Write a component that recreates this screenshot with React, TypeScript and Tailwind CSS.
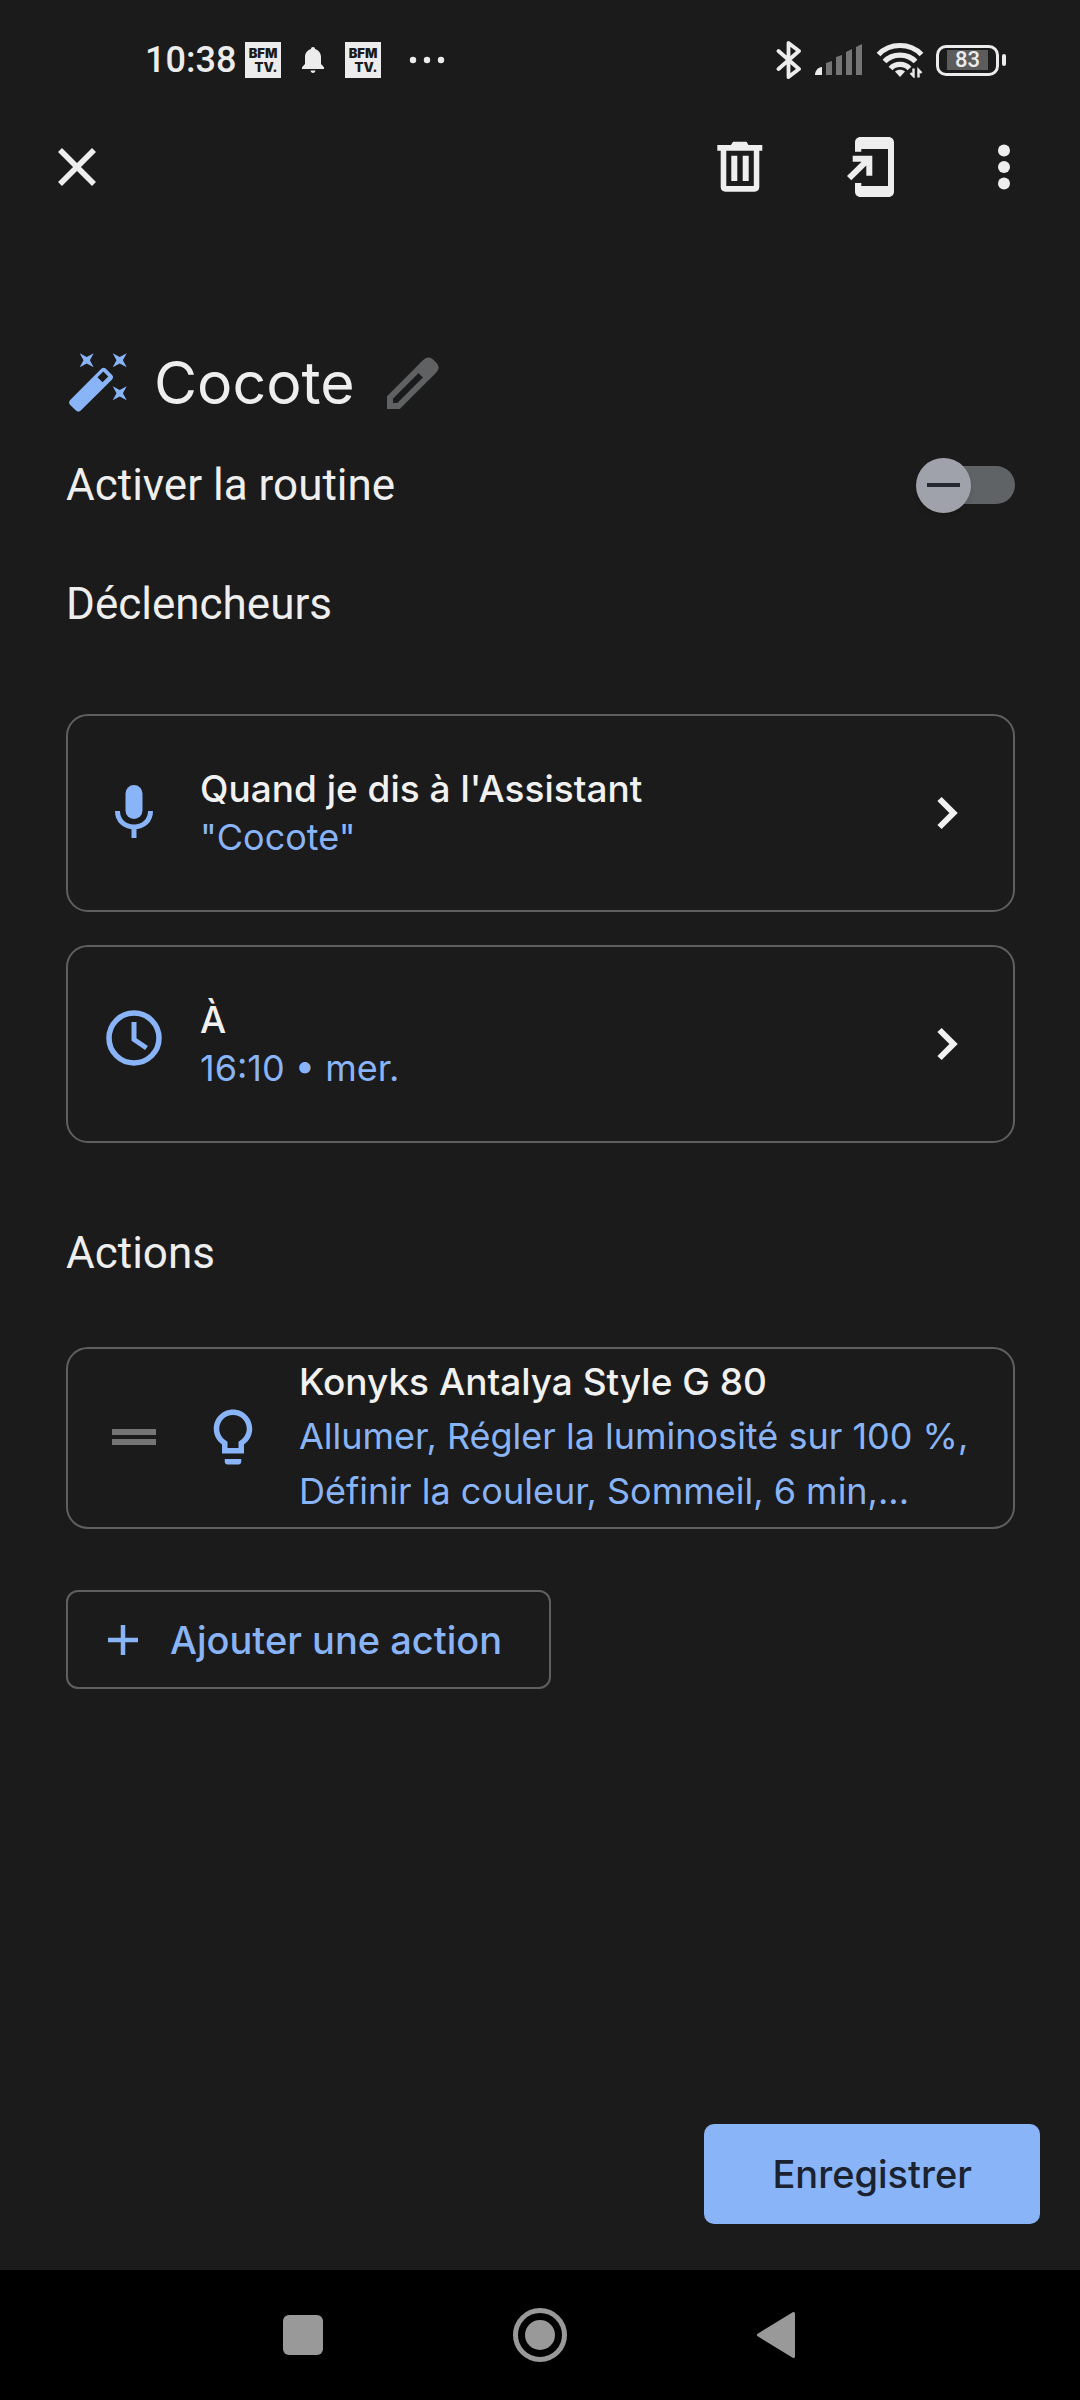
import { useState, type ReactNode } from "react";

function ChannelBadge() {
  return (
    <span className="flex h-9 w-9 flex-col items-end justify-center bg-[#ececec] pr-1 font-[Inter,sans-serif] text-[13px] leading-[14px] font-black text-[#1b1b1b]">
      <span>BFM</span>
      <span>TV.</span>
    </span>
  );
}

function StatusBar() {
  return (
    <div className="flex h-[120px] items-center pr-[74px] pl-[145px] text-[#ececec]">
      <span className="font-[Roboto,sans-serif] text-[36px] leading-[44px] font-medium">10:38</span>
      <div className="ml-[9px] flex items-center">
        <ChannelBadge />
        <svg className="ml-5 h-[26px] w-6" viewBox="0 0 24 26" fill="currentColor" aria-hidden="true">
          <path d="M12 0c1.3 0 2 .9 2 2.1C17.600 3.200 20 6.200 20 10v7l3 3.200V22H1v-1.800L4 17v-7c0-3.800 2.400-6.800 6-7.900C10 .9 10.700 0 12 0zM9.600 23.500h4.800c0 1.400-1 2.500-2.400 2.500s-2.400-1.100-2.400-2.500z" />
        </svg>
        <span className="ml-5">
          <ChannelBadge />
        </span>
        <svg className="ml-7 h-2 w-9" viewBox="0 0 36 8" fill="currentColor" aria-hidden="true">
          <circle cx="4" cy="4" r="3.200" />
          <circle cx="18" cy="4" r="3.200" />
          <circle cx="32" cy="4" r="3.200" />
        </svg>
      </div>
      <div className="ml-auto flex items-center gap-3">
        <svg className="h-10 w-[26px]" viewBox="0 0 26 40" fill="none" stroke="currentColor" strokeWidth="3.800" strokeLinejoin="round" strokeLinecap="round" aria-hidden="true">
          <path d="M2.500 11 23 29 12.500 37V3L23 11 2.500 29" />
        </svg>
        <svg className="h-8 w-[50px]" viewBox="0 0 50 32" aria-hidden="true">
          <path d="M1 31c0-4 3-8 7-8v8z" fill="#ececec" />
          <path d="M12 19l6-2v14h-6zM22 13l6-2v20h-6zM32 8l6-3v26h-6zM42 3l6-3v31h-6z" fill="#757575" />
        </svg>
        <svg className="h-9 w-12" viewBox="0 0 48 36" fill="none" stroke="currentColor" strokeWidth="5.200" aria-hidden="true">
          <path d="M2.500 12.500C14 .5 34 .5 45.500 12.500" />
          <path d="M8.500 19.500c8-8.500 23-8.500 31 0" />
          <path d="M14.500 26.500c5-5.500 14-5.500 19 0" />
          <path d="M24 35l-5-5.500c2.500-2.300 7.500-2.300 10 0z" fill="currentColor" stroke="none" />
          <path d="M37.500 26.500V34l-3-3M42.500 35.500V28l3 3" strokeWidth="2.400" />
        </svg>
        <div className="flex items-center gap-[3px]">
          <span className="flex h-[31px] w-[63px] items-center justify-center rounded-[10px] border-[3px] border-[#ececec]">
            <span className="flex h-5 w-[41px] items-center justify-center bg-[#5c5c5c] font-[Roboto,sans-serif] text-[22px] leading-5 font-medium">
              83
            </span>
          </span>
          <span className="h-3 w-1 rounded-sm bg-[#ececec]" />
        </div>
      </div>
    </div>
  );
}

function IconButton({ label, children }: { label: string; children: ReactNode }) {
  return (
    <button type="button" aria-label={label} className="h-[66px] w-[66px]">
      {children}
    </button>
  );
}

function Header() {
  return (
    <header className="flex h-[94px] items-center justify-between pr-[43px] pl-11 text-[#eeeeee]">
      <IconButton label="Fermer">
        <svg viewBox="0 0 66 66" fill="none" stroke="currentColor" strokeWidth="5.600" aria-hidden="true">
          <path d="M16 16l34 34M50 16L16 50" />
        </svg>
      </IconButton>
      <div className="flex gap-[66px]">
        <IconButton label="Supprimer">
          <svg viewBox="0 0 66 66" fill="currentColor" aria-hidden="true">
            <path fillRule="evenodd" d="M26 7.700h13.500L41.500 11h13.800v5.700h-3V53c0 2.800-2 4.700-4.700 4.700H18.400c-2.700 0-4.700-1.900-4.700-4.700V16.700h-3.400V11H24zM19.300 16.700V52h27.500V16.700z" />
            <path d="M24.300 21.700h6V47h-6zM35.700 21.700h6V47h-6z" />
          </svg>
        </IconButton>
        <IconButton label="Ajouter à l'écran d'accueil">
          <svg viewBox="-5 0 66 66" fill="currentColor" aria-hidden="true">
            <path d="M11 17.700V8.500C11 5.300 13.300 3 16.500 3h28C47.700 3 50 5.300 50 8.500v49c0 3.200-2.300 5.500-5.500 5.500h-28c-3.200 0-5.500-2.300-5.500-5.500V49h6.300v3H44V15H17.300v2.700z" />
            <path d="M8.700 21.700h19.600v20H22.300V31.500L7.300 46.200 3 41.900 17.600 27.700H8.700z" />
          </svg>
        </IconButton>
        <IconButton label="Plus d'options">
          <svg viewBox="0 0 66 66" fill="currentColor" aria-hidden="true">
            <circle cx="33" cy="16.500" r="6" />
            <circle cx="33" cy="33" r="6" />
            <circle cx="33" cy="49.500" r="6" />
          </svg>
        </IconButton>
      </div>
    </header>
  );
}

function WandIcon() {
  return (
    <svg className="h-[66px] w-[66px]" viewBox="2 0 66 66" fill="#8ab4f8" aria-hidden="true">
      <path fillRule="evenodd" d="M37.300 18.800c1.400-1.400 3.200-1.400 4.600 0l6.200 6.200c1.300 1.300 1.300 3 0 4.400L16.800 60.600c-1.500 1.500-3.400 1.500-4.900 0l-5.700-5.700c-1.500-1.500-1.500-3.400 0-4.900zM39.300 21.500l-5.800 5.800 5 5 5.800-5.800z" />
      <path d="M15.700 3.300l7 3.800 7-3.800-3.800 7 3.800 7-7-3.800-7 3.800 3.800-7zM48.700 3.300l7 3.800 7-3.800-3.800 7 3.800 7-7-3.800-7 3.800 3.800-7zM48.700 36.300l7 3.800 7-3.800-3.800 7 3.800 7-7-3.800-7 3.800 3.800-7z" />
    </svg>
  );
}

function MicIcon() {
  return (
    <svg className="h-[66px] w-[66px]" viewBox="0 0 66 66" aria-hidden="true">
      <rect x="24.500" y="11" width="17" height="34" rx="8.500" fill="#8ab4f8" />
      <path d="M16.500 37c0 9.500 7 16 16.500 16s16.500-6.500 16.500-16M33 53v11" fill="none" stroke="#8ab4f8" strokeWidth="5" />
    </svg>
  );
}

function ClockIcon() {
  return (
    <svg className="h-[66px] w-[66px]" viewBox="0 0 66 66" fill="none" stroke="#8ab4f8" strokeWidth="5.500" aria-hidden="true">
      <circle cx="33" cy="33" r="25" />
      <path d="M33 17v17.500l12.500 8.500" strokeWidth="5" />
    </svg>
  );
}

function TriggerCard({ icon, title, detail }: { icon: ReactNode; title: string; detail: string }) {
  return (
    <button
      type="button"
      className="flex h-[198px] w-full items-center rounded-[22px] border-2 border-[#5f5f5f] px-[33px] text-left font-[Inter,sans-serif]"
    >
      <span className="mb-3">{icon}</span>
      <span className="ml-[33px] flex flex-1 flex-col leading-12">
        <span className="text-[37px] font-medium text-[#f1f1f1]">{title}</span>
        <span className="text-[36px] text-[#8ab4f8]">{detail}</span>
      </span>
      <svg className="h-[66px] w-[66px]" viewBox="0 0 66 66" fill="none" stroke="#f1f1f1" strokeWidth="6" aria-hidden="true">
        <path d="M25.500 19l14 14-14 14" />
      </svg>
    </button>
  );
}

function ActionCard() {
  return (
    <div className="flex items-center rounded-[22px] border-2 border-[#5f5f5f] pt-[5px] pr-7 pb-2 pl-[33px] font-[Inter,sans-serif]">
      <button type="button" aria-label="Déplacer l'action" className="flex h-[66px] w-[66px] flex-col items-center justify-center gap-1">
        <span className="h-1.5 w-11 bg-[#757575]" />
        <span className="h-1.5 w-11 bg-[#757575]" />
      </button>
      <svg className="ml-[33px] h-[66px] w-[66px] shrink-0" viewBox="0 0 24 24" fill="#8ab4f8" aria-hidden="true">
        <path d="M9 21c0 .55.45 1 1 1h4c.55 0 1-.45 1-1v-1H9v1zm3-19C8.140 2 5 5.140 5 9c0 2.380 1.190 4.470 3 5.740V18h8v-3.260c1.810-1.270 3-3.360 3-5.740 0-3.860-3.140-7-7-7zm2.850 11.100-.85.6V16h-4v-2.300l-.85-.6C7.800 12.160 7 10.630 7 9c0-2.760 2.240-5 5-5s5 2.240 5 5c0 1.630-.8 3.160-2.150 4.100z" />
      </svg>
      <div className="ml-[33px] min-w-0 flex-1 leading-[55px]">
        <p className="truncate text-[37px] font-medium text-[#f1f1f1]">Konyks Antalya Style G 80</p>
        <p className="text-[36px] text-[#8ab4f8]">Allumer, Régler la luminosité sur 100&nbsp;%, Définir la couleur, Sommeil, 6 min,...</p>
      </div>
    </div>
  );
}

function SectionTitle({ children }: { children: ReactNode }) {
  return <h2 className="font-[Roboto,sans-serif] text-[44px] leading-[52px] text-[#eeeeee]">{children}</h2>;
}

function NavigationBar() {
  return (
    <nav aria-label="Navigation du système" className="flex h-[130px] items-center justify-center gap-[181px] bg-black">
      <button type="button" aria-label="Applications récentes" className="h-14 w-14">
        <svg viewBox="0 0 56 56" fill="#999999" aria-hidden="true">
          <rect x="8" y="8" width="40" height="40" rx="6" />
        </svg>
      </button>
      <button type="button" aria-label="Accueil" className="h-14 w-14">
        <svg viewBox="0 0 56 56" aria-hidden="true">
          <circle cx="28" cy="28" r="24.500" fill="none" stroke="#999999" strokeWidth="5" />
          <circle cx="28" cy="28" r="15" fill="#999999" />
        </svg>
      </button>
      <button type="button" aria-label="Retour" className="h-14 w-14">
        <svg viewBox="0 0 56 56" fill="#999999" stroke="#999999" strokeWidth="3" strokeLinejoin="round" aria-hidden="true">
          <path d="M9.500 28L44.500 6.500v43z" />
        </svg>
      </button>
    </nav>
  );
}

export default function App() {
  const [enabled, setEnabled] = useState(false);

  return (
    <div className="flex min-h-screen flex-col bg-[#1b1b1b]">
      <StatusBar />
      <Header />
      <main className="flex flex-1 flex-col pt-[133px] pr-[65px] pl-[66px]">
        <div className="flex h-[72px] items-center">
          <WandIcon />
          <h1 className="ml-[22px] font-[Inter,sans-serif] text-[59px] leading-[72px] text-[#eeeeee]">Cocote</h1>
          <button type="button" aria-label="Modifier le nom" className="ml-6 h-[66px] w-[66px]">
            <svg viewBox="0 0 66 66" fill="none" stroke="#606162" strokeWidth="6" aria-hidden="true">
              <path d="M11 47.500V56h8.500L52.500 23 44 14.500z" />
              <path d="M39.500 19l8.500 8.500 7.500-7.500c1.500-1.500 1.500-3.500 0-5L52 11.500c-1.500-1.500-3.500-1.500-5 0z" fill="#606162" strokeLinejoin="round" />
            </svg>
          </button>
        </div>

        <label className="relative mt-[38px] flex h-14 items-center justify-between font-[Roboto,sans-serif] text-[44px] leading-[52px] text-[#eeeeee]">
          Activer la routine
          <input
            type="checkbox"
            role="switch"
            className="peer sr-only"
            checked={enabled}
            onChange={(event) => setEnabled(event.target.checked)}
          />
          <span className="flex h-[55px] w-[99px] items-center peer-checked:flex-row-reverse">
            <span className="z-10 flex h-[55px] w-[55px] items-center justify-center rounded-full bg-[#9fa2aa] shadow-md">
              <span className="h-1 w-[33px] bg-[#24282f]" />
            </span>
            <span className="-mx-7 h-[38px] flex-1 rounded-full bg-[#5f6366] [&:last-child]:mr-0" />
          </span>
        </label>

        <div className="mt-[65px]">
          <SectionTitle>Déclencheurs</SectionTitle>
        </div>
        <div className="mt-[84px] flex flex-col gap-[33px]">
          <TriggerCard icon={<MicIcon />} title="Quand je dis à l'Assistant" detail={'"Cocote"'} />
          <TriggerCard icon={<ClockIcon />} title="À" detail="16:10 • mer." />
        </div>

        <div className="mt-[84px]">
          <SectionTitle>Actions</SectionTitle>
        </div>
        <div className="mt-[68px]">
          <ActionCard />
        </div>
        <button
          type="button"
          className="mt-[61px] flex h-[99px] items-center self-start rounded-xl border-2 border-[#5f5f5f] pr-[47px] pl-[39px] font-[Inter,sans-serif] text-[38px] leading-12 font-medium text-[#8ab4f8]"
        >
          <svg className="h-8 w-8" viewBox="0 0 32 32" fill="none" stroke="currentColor" strokeWidth="4.500" aria-hidden="true">
            <path d="M16 1v30M1 16h30" />
          </svg>
          <span className="ml-[31px]">Ajouter une action</span>
        </button>
      </main>

      <footer className="flex justify-end px-10 pt-11 pb-[46px]">
        <button
          type="button"
          className="h-[100px] rounded-[10px] bg-[#8ab4f8] px-[68px] font-[Inter,sans-serif] text-[38px] leading-12 font-medium text-[#1b2230]"
        >
          Enregistrer
        </button>
      </footer>
      <NavigationBar />
    </div>
  );
}
